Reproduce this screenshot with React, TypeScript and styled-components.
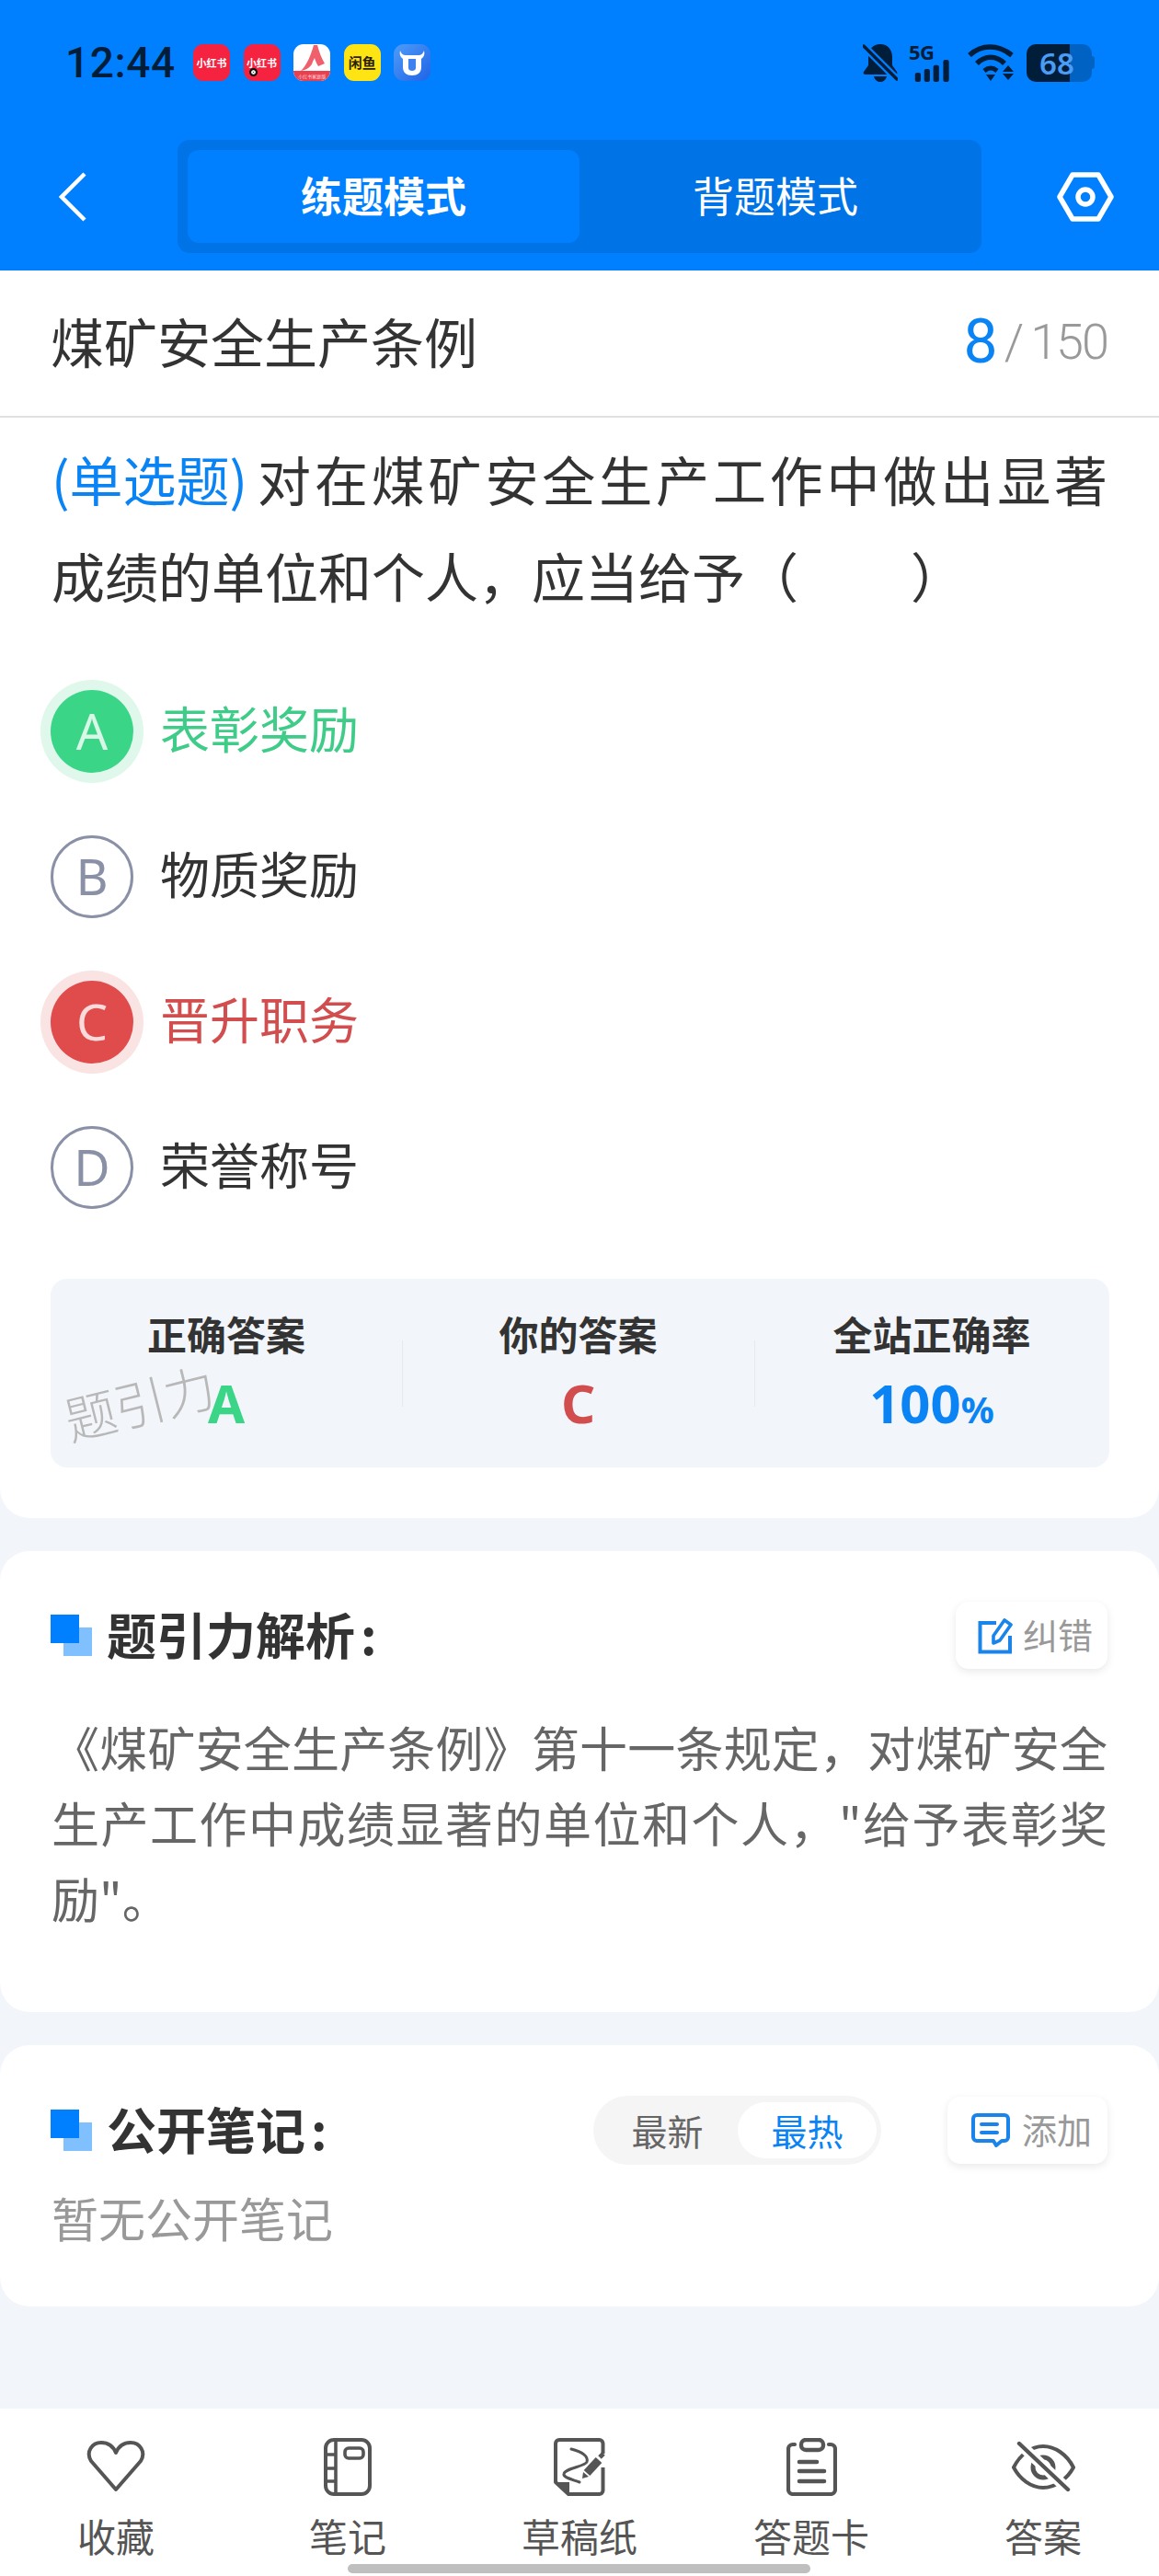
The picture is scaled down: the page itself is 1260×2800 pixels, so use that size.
import React from "react";
import styled, { createGlobalStyle } from "styled-components";

const Global = createGlobalStyle`
  html, body { margin: 0; padding: 0; background: #f2f5f9; }
  * { box-sizing: border-box; }
  body { font-family: "Noto Sans CJK SC", "Noto Sans", sans-serif; }
`;

const Page = styled.div`
  position: relative;
  width: 1260px;
  height: 2800px;
  display: flex;
  flex-direction: column;
  background: #f2f5f9;
  overflow: hidden;
`;

const Header = styled.header`
  background: #0080ff;
  height: 294px;
  flex: none;
`;

const StatusBar = styled.div`
  display: flex;
  align-items: center;
  height: 152px;
  padding: 47px 70px 63px 71px;
  color: #001d3a;
`;

const Time = styled.div`
  font-family: Roboto, sans-serif;
  font-weight: 500;
  font-size: 46px;
  line-height: 42px;
  width: 139px;
  letter-spacing: 0.6px;
`;

const AppIcons = styled.div`
  display: flex;
  gap: 14.6px;
`;

const AppIcon = styled.div<{ $bg: string; $fg?: string; $size?: number }>`
  position: relative;
  width: 40px;
  height: 40px;
  border-radius: 11px;
  overflow: hidden;
  background: ${(p) => p.$bg};
  color: ${(p) => p.$fg || "#fff"};
  font-size: ${(p) => p.$size || 11}px;
  font-weight: 700;
  line-height: 40px;
  text-align: center;
  white-space: nowrap;
`;

const AppDot = styled.span`
  position: absolute;
  left: 6px;
  bottom: 5px;
  width: 9px;
  height: 9px;
  border-radius: 50%;
  background: #111;
  border: 2.5px solid #111;
  box-shadow: inset 0 0 0 2px #eee;
`;

const AppBand = styled.span`
  position: absolute;
  left: 0;
  right: 0;
  bottom: 0;
  height: 11px;
  background: #e8404f;
  color: #ffd9dd;
  font-size: 5px;
  font-weight: 400;
  line-height: 11px;
`;

const StatusRight = styled.div`
  margin-left: auto;
  display: flex;
  align-items: center;
`;

const SignalBox = styled.div`
  width: 50px;
  height: 42px;
  margin-left: 12px;
  display: flex;
  flex-direction: column;
  justify-content: space-between;
`;

const FiveG = styled.div`
  font-family: "Noto Sans", sans-serif;
  font-size: 22px;
  font-weight: 700;
  line-height: 17px;
  letter-spacing: -0.5px;
  color: #001d3a;
  padding-top: 1px;
`;

const Battery = styled.div`
  width: 71px;
  height: 41px;
  margin-left: 12px;
  border-radius: 10px;
  background: linear-gradient(90deg, #001d3a 66%, #0062c2 66%);
  color: #4a9cf5;
  font-family: "Noto Sans", sans-serif;
  font-weight: 600;
  font-size: 33px;
  line-height: 41px;
  padding-left: 14px;
`;

const BatteryNub = styled.span`
  width: 3px;
  height: 14px;
  background: #0062c2;
  border-radius: 0 3px 3px 0;
`;

const Nav = styled.nav`
  display: flex;
  align-items: flex-start;
`;

const Back = styled.div`
  width: 193px;
  height: 123px;
  padding-left: 64px;
  display: flex;
  align-items: center;
`;

const Segment = styled.div`
  width: 874px;
  height: 123px;
  padding: 11px;
  display: grid;
  grid-template-columns: 1fr 1fr;
  background: #0073e6;
  border-radius: 13px;
`;

const Tab = styled.div<{ $active?: boolean }>`
  display: flex;
  align-items: center;
  justify-content: center;
  padding-bottom: 4px;
  border-radius: 12px;
  color: #fff;
  font-size: 45px;
  font-weight: ${(p) => (p.$active ? 700 : 400)};
  background: ${(p) => (p.$active ? "#0080ff" : "transparent")};
`;

const Settings = styled.div`
  flex: 1;
  height: 123px;
  padding-left: 82px;
  display: flex;
  align-items: center;
`;

const Main = styled.main`
  flex: 1;
  display: flex;
  flex-direction: column;
  gap: 36px;
`;

const QuestionCard = styled.section`
  background: #fff;
  border-radius: 0 0 32px 32px;
  height: 1356px;
`;

const TitleRow = styled.div`
  height: 160px;
  padding: 0 56px 6px 55px;
  display: flex;
  align-items: center;
  justify-content: space-between;
  border-bottom: 2px solid #e0e0e0;
`;

const Title = styled.h1`
  margin: 0;
  font-size: 58px;
  font-weight: 400;
  color: #333;
  line-height: 90px;
`;

const Counter = styled.div`
  display: flex;
  align-items: center;
  margin-top: 3px;
  font-family: Roboto, sans-serif;
  color: #999;
  font-size: 54px;
  font-weight: 300;
  letter-spacing: -2px;
`;

const CounterNow = styled.span`
  color: #0a84f5;
  font-size: 66px;
  font-weight: 400;
  margin-right: 9px;
`;

const CounterSlash = styled.span`
  margin-right: 9px;
`;

const Question = styled.p`
  margin: 0;
  padding: 14px 56px 0 56px;
  font-size: 58px;
  line-height: 105px;
  color: #333;
  text-align: justify;
`;

const QType = styled.span`
  display: inline-block;
  color: #0a84f5;
  margin-right: 7px;
`;

const Blank = styled.span`
  display: inline-block;
  width: 122px;
`;

const Options = styled.div`
  margin-top: 38px;
  display: flex;
  flex-direction: column;
`;

const OptionRow = styled.div`
  height: 158px;
  padding-left: 55px;
  display: flex;
  align-items: center;
  gap: 29px;
`;

type Tone = "right" | "wrong" | "plain";
const toneFill: Record<Tone, string> = { right: "#3bd588", wrong: "#e04c4c", plain: "#fff" };
const toneHalo: Record<Tone, string> = { right: "#e0f8ec", wrong: "#fae3e3", plain: "transparent" };
const toneText: Record<Tone, string> = { right: "#3fcc88", wrong: "#d24d4d", plain: "#333" };

const OptionBadge = styled.div<{ $tone: Tone }>`
  width: 90px;
  height: 90px;
  border-radius: 50%;
  display: flex;
  align-items: center;
  justify-content: center;
  padding-bottom: 2px;
  font-family: "Noto Sans", sans-serif;
  font-size: 54px;
  background: ${(p) => toneFill[p.$tone]};
  color: ${(p) => (p.$tone === "plain" ? "#8a90a6" : "rgba(255,255,255,.8)")};
  border: ${(p) => (p.$tone === "plain" ? "3px solid #8a90a6" : "none")};
  box-shadow: 0 0 0 11px ${(p) => toneHalo[p.$tone]};
`;

const OptionText = styled.div<{ $tone: Tone }>`
  font-size: 54px;
  padding-bottom: 10px;
  color: ${(p) => toneText[p.$tone]};
`;

const Stats = styled.div`
  position: relative;
  margin: 42px 54px 0 55px;
  height: 205px;
  border-radius: 18px;
  background: #f2f5f9;
  display: grid;
  grid-template-columns: 382px 383px 386px;
`;

const StatCell = styled.div`
  display: flex;
  flex-direction: column;
  align-items: center;
  padding-top: 33px;
  position: relative;
  & + &::before {
    content: "";
    position: absolute;
    left: 0;
    top: 67px;
    height: 72px;
    width: 1px;
    background: #e6e9ee;
  }
`;

const StatLabel = styled.div`
  font-size: 43px;
  line-height: 52px;
  font-weight: 700;
  color: #333;
`;

const StatValue = styled.div<{ $color: string }>`
  margin-top: 20px;
  font-family: "Noto Sans", sans-serif;
  font-weight: 700;
  font-size: 58px;
  line-height: 60px;
  color: ${(p) => p.$color};
  position: relative;
`;

const Percent = styled.span`
  font-size: 40px;
`;

const Watermark = styled.div`
  position: absolute;
  left: 16px;
  top: 120px;
  font-size: 56px;
  font-weight: 300;
  line-height: 66px;
  letter-spacing: -1px;
  color: #b8b8b8;
  transform: rotate(-14deg);
  transform-origin: left center;
  white-space: nowrap;
`;

const Card = styled.section<{ $height: number }>`
  background: #fff;
  border-radius: 32px;
  height: ${(p) => p.$height}px;
  padding: 55px 56px 0 55px;
`;

const SectionHead = styled.div`
  display: flex;
  align-items: center;
`;

const Marker = styled.div`
  position: relative;
  width: 45px;
  height: 45px;
  flex: none;
  margin-right: 16px;
  background: linear-gradient(#0080ff, #0080ff) 0 0 / 31px 31px no-repeat,
    linear-gradient(#80c0ff, #80c0ff) 14px 14px / 31px 31px no-repeat;
`;

const SectionTitle = styled.h2`
  margin: 0;
  padding-bottom: 4px;
  font-size: 54px;
  font-weight: 700;
  color: #333;
  line-height: 60px;
  white-space: nowrap;
`;

const Colon = styled.span`
  margin-left: 6px;
`;

const ActionButton = styled.div<{ $width: number }>`
  margin-left: auto;
  width: ${(p) => p.$width}px;
  height: 73px;
  flex: none;
  border-radius: 14px;
  background: #fff;
  box-shadow: 0 3px 10px rgba(0, 0, 0, 0.09);
  display: flex;
  align-items: center;
  padding-left: ${(p) => (p.$width > 170 ? 26 : 24)}px;
  gap: ${(p) => (p.$width > 170 ? 13 : 11)}px;
  color: #999;
  font-size: 38px;
`;

const ActionLabel = styled.span`
  padding-bottom: 4px;
`;

const BodyText = styled.p`
  margin: 44px 0 0 1px;
  font-size: 52px;
  line-height: 82px;
  color: #666;
  text-align: justify;
`;

const SortToggle = styled.div`
  margin-left: auto;
  width: 313px;
  height: 75px;
  border-radius: 38px;
  background: #f5f5f5;
  display: flex;
  align-items: center;
  padding: 0 5px 0 4px;
`;

const SortOption = styled.div<{ $active?: boolean }>`
  flex: ${(p) => (p.$active ? "0 0 151px" : "1")};
  height: 61px;
  border-radius: 31px;
  display: flex;
  align-items: center;
  justify-content: center;
  padding-bottom: 2px;
  font-size: 39px;
  color: ${(p) => (p.$active ? "#0a84f5" : "#666")};
  background: ${(p) => (p.$active ? "#fff" : "transparent")};
`;

const AddSlot = styled.div`
  margin-left: 72px;
  flex: none;
`;

const Empty = styled.p`
  margin: 22px 0 0 1px;
  font-size: 51px;
  line-height: 70px;
  color: #999;
`;

const Footer = styled.footer`
  height: 182px;
  flex: none;
  background: #fff;
  display: grid;
  grid-template-columns: repeat(5, 1fr);
`;

const FooterItem = styled.div`
  display: flex;
  flex-direction: column;
  align-items: center;
  padding-top: 30px;
  color: #555;
`;

const FooterIcon = styled.div`
  height: 66px;
  display: flex;
  align-items: center;
  justify-content: center;
`;

const FooterLabel = styled.div`
  margin-top: 17px;
  font-size: 42px;
  line-height: 50px;
`;

const HomeIndicator = styled.div`
  position: absolute;
  left: 378px;
  bottom: 3px;
  width: 503px;
  height: 10px;
  border-radius: 5px;
  background: #bfbfbf;
`;

const DARK = "#001d3a";
const INK = "#555";
const BLUE = "#1a84ea";

const BellOff = () => (
  <svg width="38" height="42" viewBox="0 0 38 42">
    <path d="M19 1c8 0 13 6 13 14v9l5 7c1 2 0 3-2 3H3c-2 0-3-1-2-3l5-7v-9C6 7 11 1 19 1z" fill={DARK} />
    <path d="M12 36h14c-1 4-4 6-7 6s-6-2-7-6z" fill={DARK} />
    <path d="M0 2l38 38" stroke="#0080ff" strokeWidth="8" />
    <path d="M1 3l36 36" stroke={DARK} strokeWidth="3.4" strokeLinecap="round" />
  </svg>
);

const Bars = () => (
  <svg width="50" height="29" viewBox="0 0 50 29" style={{ display: "block" }}>
    <rect x="3" y="17" width="7.5" height="12" rx="2.5" fill={DARK} />
    <rect x="15" y="12" width="7.5" height="17" rx="2.5" fill={DARK} />
    <rect x="27" y="7" width="7.5" height="22" rx="2.5" fill={DARK} />
    <rect x="40" y="0" width="7.5" height="29" rx="2.5" fill={DARK} />
  </svg>
);

const Wifi = () => (
  <svg width="52" height="42" viewBox="0 0 52 42" style={{ marginLeft: 14 }}>
    <path d="M2 13C15 1 33 1 48 13" fill="none" stroke={DARK} strokeWidth="5.5" />
    <path d="M10 22C19 13 31 13 40 22" fill="none" stroke={DARK} strokeWidth="5.5" />
    <path d="M18 30c5-4 9-4 14 0" fill="none" stroke={DARK} strokeWidth="5" />
    <path d="M20 34h10l-5 7z" fill={DARK} />
    <path d="M44 24l6 7H38zM38 33h12l-6 7z" fill={DARK} />
  </svg>
);

const BackArrow = () => (
  <svg width="30" height="54" viewBox="0 0 30 54">
    <path d="M28 2L3 27l25 25" fill="none" stroke="#fff" strokeWidth="4.5" />
  </svg>
);

const Hex = () => (
  <svg width="62" height="54" viewBox="0 0 62 54">
    <path d="M17 3h28l14 24-14 24H17L3 27z" fill="none" stroke="#fff" strokeWidth="5.5" strokeLinejoin="round" />
    <circle cx="31" cy="27" r="8" fill="none" stroke="#fff" strokeWidth="5.5" />
  </svg>
);

const EditIcon = () => (
  <svg width="38" height="40" viewBox="0 0 38 40">
    <path d="M20 6H2.5v31.5H35V20" fill="none" stroke={BLUE} strokeWidth="4" />
    <path d="M17 28v-8L29 3l7 5-12 17z" fill="none" stroke={BLUE} strokeWidth="3.6" strokeLinejoin="round" />
  </svg>
);

const NoteIcon = () => (
  <svg width="42" height="37" viewBox="0 0 42 37">
    <path d="M6 2h30a4 4 0 0 1 4 4v20a4 4 0 0 1-4 4h-3l-6 5-3-5H6a4 4 0 0 1-4-4V6a4 4 0 0 1 4-4z" fill="none" stroke={BLUE} strokeWidth="4" strokeLinejoin="round" />
    <path d="M11 12h17M11 21h17" stroke={BLUE} strokeWidth="4" strokeLinecap="round" />
  </svg>
);

const HeartIcon = () => (
  <svg width="64" height="56" viewBox="0 0 64 56">
    <path d="M32 53L5 22C-1 12 6 2 16 2c7 0 13 4 16 11C35 6 41 2 48 2c10 0 17 10 11 20z" fill="none" stroke={INK} strokeWidth="4" strokeLinejoin="round" />
  </svg>
);

const NotebookIcon = () => (
  <svg width="52" height="63" viewBox="0 0 52 63">
    <rect x="2" y="2" width="48" height="59" rx="9" fill="none" stroke={INK} strokeWidth="4" />
    <path d="M13 2v59M2 18h11M2 33h11M2 47h11" stroke={INK} strokeWidth="3.6" />
    <rect x="23" y="11" width="20" height="11" rx="4" fill="none" stroke={INK} strokeWidth="3.6" />
  </svg>
);

const DraftIcon = () => (
  <svg width="56" height="63" viewBox="0 0 56 63">
    <path d="M53.5 17V6a4 4 0 0 0-4-4H6a4 4 0 0 0-4 4v42l14 13h33.500a4 4 0 0 0 4-4V32" fill="none" stroke={INK} strokeWidth="4" strokeLinejoin="round" />
    <path d="M2 48h15v13z" fill={INK} />
    <path d="M19 12c12 3 19 8 17 14-2 5-24 7-25 13-1 4 9 6 17 9" fill="none" stroke={INK} strokeWidth="3" strokeLinecap="round" />
    <path d="M36 38l13-14" stroke={INK} strokeWidth="9" />
    <path d="M31 44l1-7 6 5z" fill={INK} />
    <path d="M50 21l4-4" stroke={INK} strokeWidth="5" />
  </svg>
);

const ClipboardIcon = () => (
  <svg width="55" height="63" viewBox="0 0 55 63">
    <rect x="16" y="2" width="24" height="11" rx="5" fill="none" stroke={INK} strokeWidth="4.4" />
    <path d="M9 7H7a5 5 0 0 0-5 5v44a5 5 0 0 0 5 5h41a5 5 0 0 0 5-5V12a5 5 0 0 0-5-5h-2" fill="none" stroke={INK} strokeWidth="4.2" strokeLinecap="round" />
    <path d="M14 26h19M14 36h27M14 47h27" stroke={INK} strokeWidth="4.6" strokeLinecap="round" />
  </svg>
);

const EyeOffIcon = () => (
  <svg width="70" height="56" viewBox="0 0 70 56">
    <path d="M3 29C10 15 22 6 35 6s26 9 33 23c-7 13-20 22-33 22S10 42 3 29z" fill="none" stroke={INK} strokeWidth="4" strokeLinejoin="round" />
    <circle cx="35" cy="29" r="11" fill="none" stroke={INK} strokeWidth="5" />
    <path d="M8 2l54 51" stroke="#fff" strokeWidth="12" />
    <path d="M9 3l53 50" stroke={INK} strokeWidth="4.4" strokeLinecap="round" />
  </svg>
);

const options: { key: string; text: string; tone: Tone }[] = [
  { key: "A", text: "表彰奖励", tone: "right" },
  { key: "B", text: "物质奖励", tone: "plain" },
  { key: "C", text: "晋升职务", tone: "wrong" },
  { key: "D", text: "荣誉称号", tone: "plain" },
];

const footerItems = [
  { label: "收藏", icon: <HeartIcon /> },
  { label: "笔记", icon: <NotebookIcon /> },
  { label: "草稿纸", icon: <DraftIcon /> },
  { label: "答题卡", icon: <ClipboardIcon /> },
  { label: "答案", icon: <EyeOffIcon /> },
];

export default function App() {
  return (
    <Page>
      <Global />
      <Header>
        <StatusBar>
          <Time>12:44</Time>
          <AppIcons>
            <AppIcon $bg="#f5233f">小红书</AppIcon>
            <AppIcon $bg="#f5233f">
              小红书
              <AppDot />
            </AppIcon>
            <AppIcon $bg="#fff">
              <svg width="40" height="30" viewBox="0 0 40 30" style={{ display: "block" }}>
                <path d="M8 29C14 24 19 12 22 1l4 0c2 8 5 15 8 20l-7 3c-2-3-3-6-4-9l-2 4c-1 5-6 9-13 10z" fill="#f0606c" />
              </svg>
              <AppBand>小红书家庭版</AppBand>
            </AppIcon>
            <AppIcon $bg="#ffe414" $fg="#2a2000" $size={15}>
              闲鱼
            </AppIcon>
            <AppIcon $bg="linear-gradient(135deg,#4f9cf8,#1f63e6)">
              <svg width="40" height="40" viewBox="0 0 40 40" style={{ display: "block" }}>
                <path d="M7 7c1 3 3 5 6 5h14c3 0 5-2 6-5 1 4 0 7-3 9v9c0 6-4 9-10 9s-10-3-10-9v-9c-3-2-4-5-3-9z" fill="#fff" />
                <path d="M16 16h8v10c0 2-2 3-4 3s-4-1-4-3z" fill="#3d82f0" />
              </svg>
            </AppIcon>
          </AppIcons>
          <StatusRight>
            <BellOff />
            <SignalBox>
              <FiveG>5G</FiveG>
              <Bars />
            </SignalBox>
            <Wifi />
            <Battery>68</Battery>
            <BatteryNub />
          </StatusRight>
        </StatusBar>
        <Nav>
          <Back>
            <BackArrow />
          </Back>
          <Segment>
            <Tab $active>练题模式</Tab>
            <Tab>背题模式</Tab>
          </Segment>
          <Settings>
            <Hex />
          </Settings>
        </Nav>
      </Header>

      <Main>
        <QuestionCard>
          <TitleRow>
            <Title>煤矿安全生产条例</Title>
            <Counter>
              <CounterNow>8</CounterNow>
              <CounterSlash>/</CounterSlash>
              150
            </Counter>
          </TitleRow>
          <Question>
            <QType>(单选题)</QType>对在煤矿安全生产工作中做出显著成绩的单位和个人，应当给予（<Blank />）
          </Question>
          <Options>
            {options.map((o) => (
              <OptionRow key={o.key}>
                <OptionBadge $tone={o.tone}>{o.key}</OptionBadge>
                <OptionText $tone={o.tone}>{o.text}</OptionText>
              </OptionRow>
            ))}
          </Options>
          <Stats>
            <StatCell>
              <StatLabel>正确答案</StatLabel>
              <StatValue $color="#3bd588">A</StatValue>
            </StatCell>
            <StatCell>
              <StatLabel>你的答案</StatLabel>
              <StatValue $color="#d24d4d">C</StatValue>
            </StatCell>
            <StatCell>
              <StatLabel>全站正确率</StatLabel>
              <StatValue $color="#0a84f5">
                100<Percent>%</Percent>
              </StatValue>
            </StatCell>
            <Watermark>题引力</Watermark>
          </Stats>
        </QuestionCard>

        <Card $height={501}>
          <SectionHead>
            <Marker />
            <SectionTitle>
              题引力解析<Colon>:</Colon>
            </SectionTitle>
            <ActionButton $width={165}>
              <EditIcon />
              <ActionLabel>纠错</ActionLabel>
            </ActionButton>
          </SectionHead>
          <BodyText>《煤矿安全生产条例》第十一条规定，对煤矿安全生产工作中成绩显著的单位和个人，"给予表彰奖励"。</BodyText>
        </Card>

        <Card $height={284}>
          <SectionHead>
            <Marker />
            <SectionTitle>
              公开笔记<Colon>:</Colon>
            </SectionTitle>
            <SortToggle>
              <SortOption>最新</SortOption>
              <SortOption $active>最热</SortOption>
            </SortToggle>
            <AddSlot>
              <ActionButton $width={174}>
                <NoteIcon />
                <ActionLabel>添加</ActionLabel>
              </ActionButton>
            </AddSlot>
          </SectionHead>
          <Empty>暂无公开笔记</Empty>
        </Card>
      </Main>

      <Footer>
        {footerItems.map((f) => (
          <FooterItem key={f.label}>
            <FooterIcon>{f.icon}</FooterIcon>
            <FooterLabel>{f.label}</FooterLabel>
          </FooterItem>
        ))}
      </Footer>
      <HomeIndicator />
    </Page>
  );
}
